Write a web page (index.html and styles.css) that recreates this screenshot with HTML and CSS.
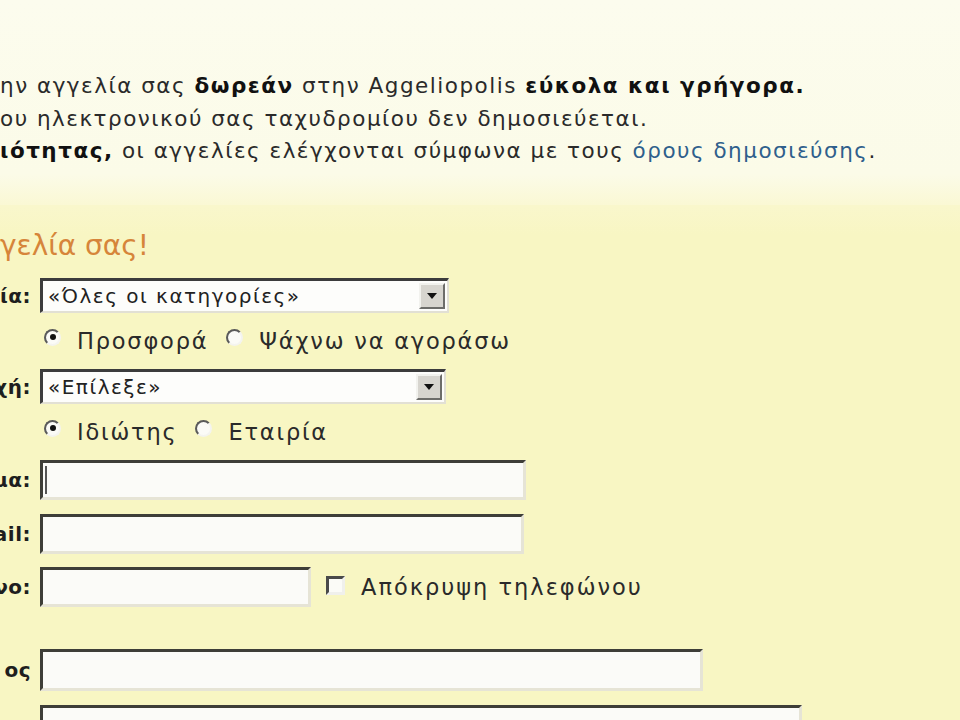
FILE: index.html
```html
<!DOCTYPE html>
<html lang="el">
<head>
<meta charset="utf-8">
<link rel="stylesheet" href="styles.css">
</head>
<body>
<div class="intro">
  <p class="line">ην αγγελία σας <b>δωρεάν</b> στην Aggeliopolis <b>εύκολα και γρήγορα.</b></p>
  <p class="line">ου ηλεκτρονικού σας ταχυδρομίου δεν δημοσιεύεται.</p>
  <p class="line"><b>ιότητας,</b> οι αγγελίες ελέγχονται σύμφωνα με τους <a class="link" href="#">όρους δημοσιεύσης</a>.</p>
</div>
<div class="form-area">
  <h1 class="title">γελία σας!</h1>
  <div class="row row-select">
    <div class="label">ία:</div>
    <div class="select w-cat"><span class="sel-text">«Όλες οι κατηγορίες»</span><span class="sel-btn"><svg width="10" height="6" viewBox="0 0 10 6"><path d="M0 0H10L5 6Z" fill="#111"/></svg></span></div>
  </div>
  <div class="row row-radio">
    <div class="label"></div>
    <div class="radios">
      <span class="radio on"></span><span class="rlabel">Προσφορά</span>
      <span class="radio"></span><span class="rlabel">Ψάχνω να αγοράσω</span>
    </div>
  </div>
  <div class="row row-select">
    <div class="label">χή:</div>
    <div class="select w-area"><span class="sel-text">«Επίλεξε»</span><span class="sel-btn"><svg width="10" height="6" viewBox="0 0 10 6"><path d="M0 0H10L5 6Z" fill="#111"/></svg></span></div>
  </div>
  <div class="row row-radio">
    <div class="label"></div>
    <div class="radios">
      <span class="radio on"></span><span class="rlabel">Ιδιώτης</span>
      <span class="radio"></span><span class="rlabel">Εταιρία</span>
    </div>
  </div>
  <div class="row row-input mb14">
    <div class="label">μα:</div>
    <div class="input w-name"><span class="caret"></span></div>
  </div>
  <div class="row row-input mb13">
    <div class="label">ail:</div>
    <div class="input w-mail"></div>
  </div>
  <div class="row row-input mb43">
    <div class="label">νο:</div>
    <div class="input w-phone"></div>
    <span class="check"></span><span class="clabel">Απόκρυψη τηλεφώνου</span>
  </div>
  <div class="row row-input mb15">
    <div class="label">ος</div>
    <div class="input w-title"></div>
  </div>
  <div class="row row-input">
    <div class="label">ο:</div>
    <div class="input w-text"></div>
  </div>
</div>
</body>
</html>
```
FILE: styles.css
```css
html, body {
  margin: 0;
  padding: 0;
}
body {
  width: 960px;
  height: 720px;
  overflow: hidden;
  background: #f8f6c3;
  font-family: "DejaVu Sans", Verdana, sans-serif;
  color: #222;
}
.intro {
  background: linear-gradient(to bottom, #fcfcee 0%, #fbfbe8 85%, #faf8d4 100%);
  height: 205px;
  padding-top: 70px;
  box-sizing: border-box;
}
.line {
  margin: 0;
  font-size: 21.5px;
  letter-spacing: 1.5px;
  line-height: 32.5px;
  white-space: nowrap;
  color: #2a2a2a;
}
.line b {
  color: #111;
}
.link {
  color: #2f5f8c;
  text-decoration: none;
}
.form-area {
  background: linear-gradient(to bottom, #f9f7cc 0%, #f8f6c3 30px);
  padding-top: 22px;
}
.title {
  margin: 0 0 13px 0;
  font-size: 28px;
  font-weight: normal;
  color: #d6853a;
  line-height: 38px;
  white-space: nowrap;
}
.row {
  display: flex;
  align-items: center;
}
.label {
  width: 31px;
  flex: none;
  display: flex;
  justify-content: flex-end;
  white-space: nowrap;
  font-weight: bold;
  font-size: 20px;
  letter-spacing: 0.5px;
  color: #1e1e1e;
  margin-right: 9px;
}
.row-select {
  height: 35px;
}
.row-radio {
  height: 56px;
}
.row-input {
  height: 40px;
}
.mb13 { margin-bottom: 13px; }
.mb14 { margin-bottom: 14px; }
.mb15 { margin-bottom: 15px; }
.mb43 { margin-bottom: 43px; }
.select {
  height: 35px;
  box-sizing: border-box;
  border: 2px solid;
  border-left-width: 3px;
  border-top-width: 3px;
  border-color: #3c3c3c #e2e0d4 #e2e0d4 #3c3c3c;
  background: #fdfdfb;
  display: flex;
  align-items: center;
  justify-content: space-between;
  padding-left: 5px;
  padding-right: 2px;
}
.w-cat { width: 409px; }
.w-area { width: 406px; }
.sel-text {
  font-size: 20px;
  letter-spacing: 1.5px;
  color: #222;
  white-space: nowrap;
}
.sel-btn {
  width: 26px;
  height: 26px;
  box-sizing: border-box;
  background: #d7d5cf;
  border: 2px solid;
  border-color: #f2f2ee #6d6d6a #6d6d6a #f2f2ee;
  display: flex;
  align-items: center;
  justify-content: center;
}
.radios {
  display: flex;
  align-items: center;
  margin-left: 4px;
}
.radio {
  width: 17px;
  height: 17px;
  box-sizing: border-box;
  border-radius: 50%;
  border: 2px solid;
  border-color: #5a5a5a #f4f4f0 #f4f4f0 #5a5a5a;
  background: #fbfbf7;
  position: relative;
  margin-top: -8px;
}
.radio.on::after {
  content: "";
  position: absolute;
  left: 3.5px;
  top: 3.5px;
  width: 6px;
  height: 6px;
  border-radius: 50%;
  background: #111;
}
.rlabel {
  font-size: 22.5px;
  letter-spacing: 1.8px;
  color: #2a2a2a;
  margin-left: 16px;
  margin-right: 18px;
  white-space: nowrap;
}
.input {
  height: 40px;
  box-sizing: border-box;
  border: 3px solid;
  border-color: #3e3e38 #e6e4d6 #e6e4d6 #3e3e38;
  background: #fbfbf8;
  position: relative;
}
.w-name { width: 486px; }
.w-mail { width: 484px; }
.w-phone { width: 271px; }
.w-title { width: 663px; height: 42px; }
.w-text { width: 762px; }
.caret {
  position: absolute;
  left: 2px;
  top: 3px;
  width: 2px;
  height: 28px;
  background: #555;
}
.check {
  width: 19px;
  height: 19px;
  box-sizing: border-box;
  border: 3px solid;
  border-color: #4a4a4a #f0f0ec #f0f0ec #4a4a4a;
  background: #fbfbf7;
  margin-left: 15px;
  margin-top: -4px;
}
.clabel {
  font-size: 22.5px;
  letter-spacing: 2px;
  color: #2a2a2a;
  margin-left: 16px;
  white-space: nowrap;
}
```
